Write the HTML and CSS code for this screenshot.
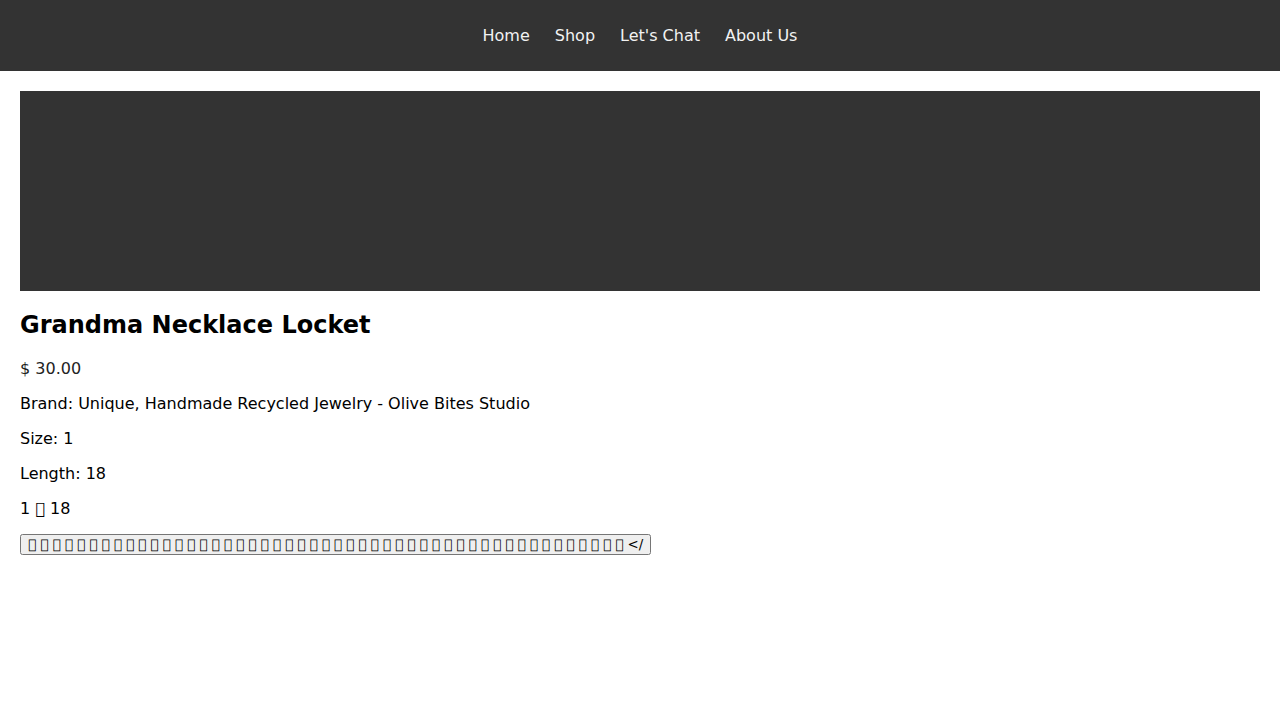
FILE: index.html
```html
<!DOCTYPE html>
<html lang="en">
<head>
<meta charset="utf-8">
<title>Grandma Necklace Locket</title>
<link rel="stylesheet" href="styles.css">
</head>
<body>
<nav class="topnav">
  <a href="#" class="nav-link">Home</a>
  <a href="#" class="nav-link">Shop</a>
  <a href="#" class="nav-link">Let's Chat</a>
  <a href="#" class="nav-link">About Us</a>
</nav>
<main class="product">
  <div class="hero"></div>
  <h2 class="title">Grandma Necklace Locket</h2>
  <p class="price">$ 30.00</p>
  <p>Brand: Unique, Handmade Recycled Jewelry - Olive Bites Studio</p>
  <p>Size: 1</p>
  <p>Length: 18</p>
  <p>1 &#xE000; 18</p>
  <p><button class="buy">&#xE000; &#xE000; &#xE000; &#xE000; &#xE000; &#xE000; &#xE000; &#xE000; &#xE000; &#xE000; &#xE000; &#xE000; &#xE000; &#xE000; &#xE000; &#xE000; &#xE000; &#xE000; &#xE000; &#xE000; &#xE000; &#xE000; &#xE000; &#xE000; &#xE000; &#xE000; &#xE000; &#xE000; &#xE000; &#xE000; &#xE000; &#xE000; &#xE000; &#xE000; &#xE000; &#xE000; &#xE000; &#xE000; &#xE000; &#xE000; &#xE000; &#xE000; &#xE000; &#xE000; &#xE000; &#xE000; &#xE000; &#xE000; &#xE000; &lt;/</button></p>
</main>
</body>
</html>
```
FILE: styles.css
```css
body {
  margin: 0;
  font-family: "DejaVu Sans", sans-serif;
  color: #000;
  background: #fff;
}
.topnav {
  background: #333;
  height: 71px;
  display: flex;
  justify-content: center;
  align-items: center;
  gap: 25px;
}
.nav-link {
  color: #f2f2f2;
  text-decoration: none;
  font-size: 16px;
}
.product {
  padding: 20px;
}
.hero {
  height: 200px;
  background: #333;
}
.title {
  font-size: 24px;
  margin: 19.92px 0;
}
.price {
  color: #222;
}
.buy {
  font-family: "DejaVu Sans", sans-serif;
  font-size: 13.333px;
}
```
